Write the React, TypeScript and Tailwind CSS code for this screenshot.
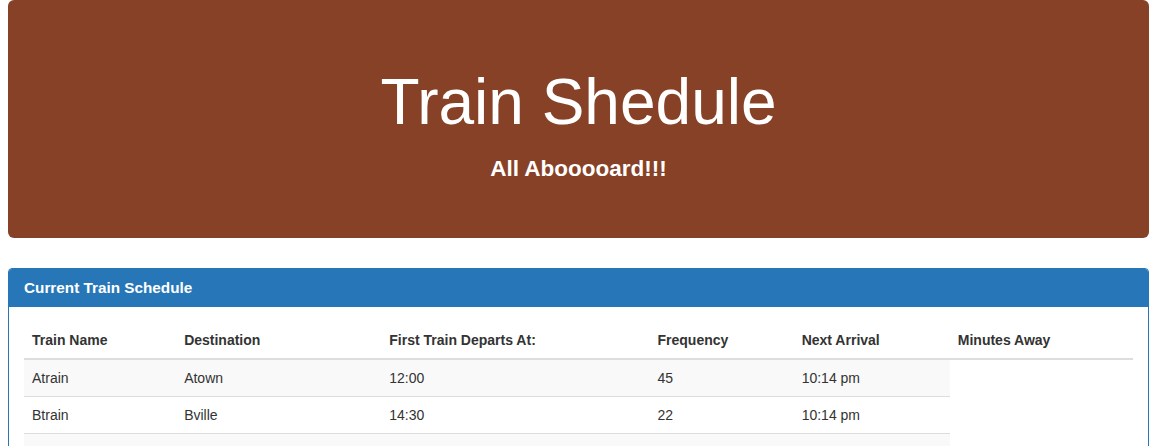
const trains = [
  { name: "Atrain", destination: "Atown", first: "12:00", frequency: "45", next: "10:14 pm" },
  { name: "Btrain", destination: "Bville", first: "14:30", frequency: "22", next: "10:14 pm" },
  { name: "", destination: "", first: "", frequency: "", next: "" },
];

export default function App ()
{
  return (
    <div className="min-h-screen bg-white px-2 text-[14px] text-[#333] [font-family:'Liberation_Sans',Arial,sans-serif]">
      {/* jumbotron */}
      <div className="mb-[30px] rounded-[6px] bg-[#874126] pt-[68px] pb-[54px] text-center text-white">
        <h1 className="text-[64px] leading-[69px]">Train Shedule</h1>
        <p className="mt-[17px] text-[22.5px] font-bold leading-[30px]">All Abooooard!!!</p>
      </div>

      {/* panel */}
      <div className="overflow-hidden rounded-[4px] border border-[#2777b8]">
        <div className="bg-[#2777b8] px-[15px] py-[10px] text-[15.3px] font-bold leading-[18px] text-white">
          Current Train Schedule
        </div>
        <div className="p-[15px]">
          <table className="w-full table-fixed border-collapse text-left">
            <colgroup>
              <col className="w-[152px]" />
              <col className="w-[205px]" />
              <col className="w-[268px]" />
              <col className="w-[144px]" />
              <col className="w-[156px]" />
              <col className="w-[183px]" />
            </colgroup>
            <thead>
              <tr>
                {["Train Name", "Destination", "First Train Departs At:", "Frequency", "Next Arrival", "Minutes Away"].map(h => (
                  <th key={h} className="border-b-2 border-[#ddd] p-2 font-bold leading-5">{h}</th>
                ))}
              </tr>
            </thead>
            <tbody>
              {trains.map((t, i) => (
                <tr key={i}>
                  {[t.name, t.destination, t.first, t.frequency, t.next].map((v, j) => (
                    <td
                      key={j}
                      className={`border-t border-[#ddd] p-2 leading-5 ${i % 2 === 0 ? "bg-[#f9f9f9]" : "bg-white"} ${i === 0 ? "border-t-0" : ""}`}
                    >
                      {v || "\u00a0"}
                    </td>
                  ))}
                </tr>
              ))}
            </tbody>
          </table>
        </div>
      </div>
    </div>
  );
}
